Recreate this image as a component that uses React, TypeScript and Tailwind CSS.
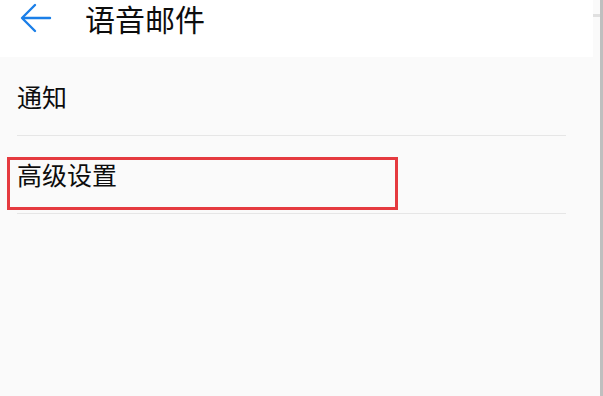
const rows = ["通知", "高级设置"];

const App = () => {
  return (
    <main
      className="relative w-[603px] h-[396px] overflow-hidden bg-[#fafafa] flex"
      style={{ fontFamily: '"Noto Sans CJK SC", "Noto Sans", sans-serif' }}
    >
      <div className="flex-1 flex flex-col">
        {/* header */}
        <header className="h-[57px] w-[593px] bg-white flex items-start">
          <div className="h-[36px] flex items-center">
            <svg
              viewBox="0 0 32 30"
              className="ml-[20px] w-[32px] h-[30px] text-[#1b7fe8]"
              fill="none"
              stroke="currentColor"
              strokeWidth="2.4"
              strokeLinecap="round"
              strokeLinejoin="round"
            >
              <path d="M30 15H3" />
              <path d="M15 2L2 15l13 13" />
            </svg>
            <h1 className="ml-[33px] text-[30px] leading-[36px] text-[#0d0d0d]">语音邮件</h1>
          </div>
        </header>

        {/* list */}
        <ul className="mt-[1px] px-[17px] w-[583px]">
          {rows.map((label) => (
            <li
              key={label}
              className="h-[78px] flex items-center border-b border-[#e6e6e6] text-[25px] leading-none text-[#0d0d0d]"
            >
              {label}
            </li>
          ))}
        </ul>
      </div>

      {/* scrollbar */}
      <div className="w-[10px] flex">
        <div className="w-[7px] pt-[14px]">
          <div className="h-[3px] bg-[#e0e0e0]" />
        </div>
        <div className="w-[3px] bg-[#bfbfbf]" />
      </div>

      {/* highlight box */}
      <div className="absolute left-[7px] top-[157px] w-[391px] h-[53px] border-[3px] border-[#e53a3f]" />
    </main>
  );
};

export default App;
